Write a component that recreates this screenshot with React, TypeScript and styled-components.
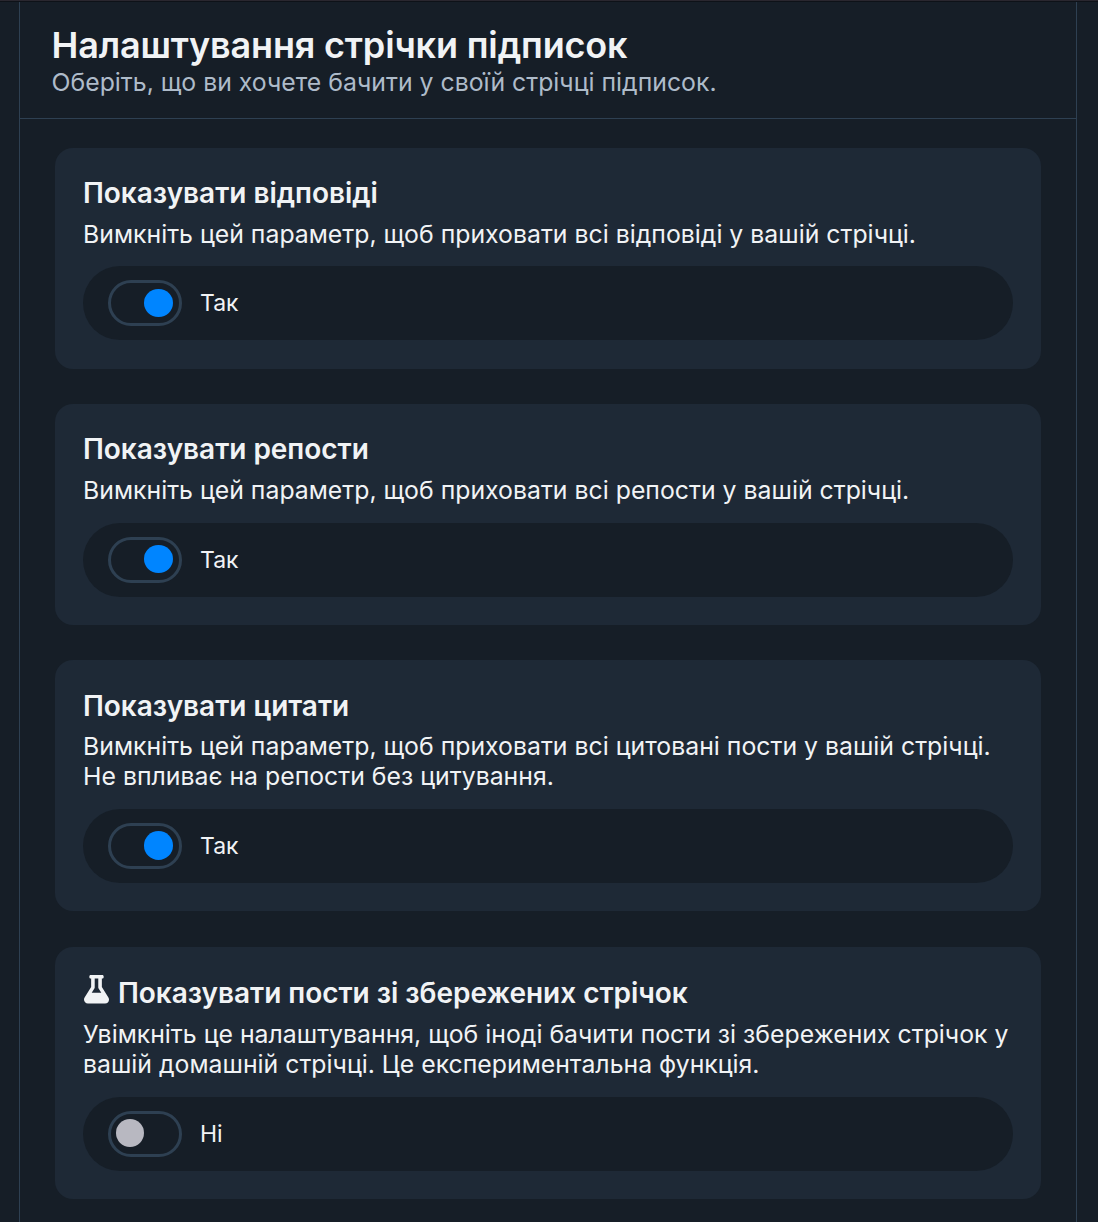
import React from "react";
import styled, { createGlobalStyle } from "styled-components";
import { FaFlask } from "react-icons/fa";

const GlobalStyle = createGlobalStyle`
  * { box-sizing: border-box; }
  body {
    margin: 0;
    background: #161e27;
    font-family: Inter, "Noto Sans", sans-serif;
    color: #f1f3f5;
  }
`;

const Page = styled.div`
  display: flex;
  flex-direction: column;
  height: 1222px;
  overflow: hidden;
  border-top: 1px solid #2a272f;
  background: #161e27;
  &::before {
    content: "";
    flex: none;
    height: 1px;
    background: #0e1218;
  }
`;

const Column = styled.main`
  flex: 1;
  min-height: 0;
  width: 1058px;
  margin-left: 19px;
  border-left: 1px solid #2e4052;
  border-right: 1px solid #2e4052;
`;

const Header = styled.header`
  height: 117px;
  padding: 22px 32px 0 31.5px;
  border-bottom: 1px solid #2e4052;
`;

const Title = styled.h1`
  margin: 0;
  font-size: 36px;
  line-height: 43px;
  font-weight: 600;
  letter-spacing: -0.16px;
  white-space: nowrap;
`;

const Subtitle = styled.p`
  margin: 0;
  font-size: 24.82px;
  line-height: 30px;
  color: #aebbc9;
  white-space: nowrap;
`;

const Cards = styled.div`
  display: flex;
  flex-direction: column;
  gap: 35.5px;
  padding: 29px 35px 0;
`;

const Card = styled.section`
  padding: 28px 28px 28.3px;
  border-radius: 18px;
  background: #1e2936;
`;

const CardTitle = styled.h2<{ $icon: boolean }>`
  display: flex;
  align-items: center;
  gap: 8.5px;
  height: ${(p) => (p.$icon ? 36.2 : 34.4)}px;
  margin: 0 0 ${(p) => (p.$icon ? 8.4 : 8.6)}px;
  font-size: 28px;
  line-height: 34px;
  font-weight: 600;
  letter-spacing: -0.03px;
  white-space: nowrap;
`;

const FlaskIcon = styled(FaFlask)`
  flex: none;
  width: 25px;
  height: 28.6px;
  margin: -7px 0 0 1.4px;
`;

const Description = styled.p`
  margin: 0 0 17.3px;
  font-size: 24.82px;
  line-height: 30.1px;
  white-space: nowrap;
`;

const ToggleRow = styled.div`
  display: flex;
  align-items: center;
  gap: 18px;
  height: 74px;
  padding-left: 25px;
  border-radius: 37px;
  background: #161e27;
`;

const Track = styled.span<{ $on: boolean }>`
  display: flex;
  align-items: flex-start;
  justify-content: ${(p) => (p.$on ? "flex-end" : "flex-start")};
  width: 74px;
  height: 46px;
  padding: ${(p) => (p.$on ? "5.5px 6px 0" : "5px 5px 0")};
  border: 3px solid #2e4052;
  border-radius: 23px;
`;

const Knob = styled.span<{ $on: boolean }>`
  width: ${(p) => (p.$on ? 29 : 28)}px;
  height: ${(p) => (p.$on ? 28.4 : 28)}px;
  border-radius: 50%;
  background: ${(p) => (p.$on ? "#0085ff" : "#b8b8c1")};
`;

const ToggleLabel = styled.span`
  font-size: 23px;
  line-height: 30px;
`;

interface Setting {
  title: string;
  lines: string[];
  on: boolean;
  experimental?: boolean;
}

const settings: Setting[] = [
  {
    title: "Показувати відповіді",
    lines: ["Вимкніть цей параметр, щоб приховати всі відповіді у вашій стрічці."],
    on: true,
  },
  {
    title: "Показувати репости",
    lines: ["Вимкніть цей параметр, щоб приховати всі репости у вашій стрічці."],
    on: true,
  },
  {
    title: "Показувати цитати",
    lines: [
      "Вимкніть цей параметр, щоб приховати всі цитовані пости у вашій стрічці.",
      "Не впливає на репости без цитування.",
    ],
    on: true,
  },
  {
    title: "Показувати пости зі збережених стрічок",
    lines: [
      "Увімкніть це налаштування, щоб іноді бачити пости зі збережених стрічок у",
      "вашій домашній стрічці. Це експериментальна функція.",
    ],
    on: false,
    experimental: true,
  },
];

export default function App() {
  return (
    <>
      <GlobalStyle />
      <Page>
        <Column>
          <Header>
            <Title>Налаштування стрічки підписок</Title>
            <Subtitle>Оберіть, що ви хочете бачити у своїй стрічці підписок.</Subtitle>
          </Header>
          <Cards>
            {settings.map((s) => (
              <Card key={s.title}>
                <CardTitle $icon={!!s.experimental}>
                  {s.experimental && <FlaskIcon />}
                  <span>{s.title}</span>
                </CardTitle>
                <Description>
                  {s.lines.map((line, i) => (
                    <React.Fragment key={line}>
                      {i > 0 && <br />}
                      {line}
                    </React.Fragment>
                  ))}
                </Description>
                <ToggleRow>
                  <Track $on={s.on}>
                    <Knob $on={s.on} />
                  </Track>
                  <ToggleLabel>{s.on ? "Так" : "Ні"}</ToggleLabel>
                </ToggleRow>
              </Card>
            ))}
          </Cards>
        </Column>
      </Page>
    </>
  );
}
